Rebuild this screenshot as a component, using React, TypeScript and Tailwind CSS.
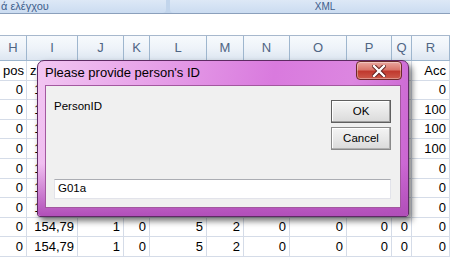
import type { ReactNode } from "react";

const cols = [
  { key: "H", w: 27 },
  { key: "I", w: 51 },
  { key: "J", w: 46 },
  { key: "K", w: 26 },
  { key: "L", w: 57 },
  { key: "M", w: 37 },
  { key: "N", w: 46 },
  { key: "O", w: 57 },
  { key: "P", w: 45 },
  { key: "Q", w: 20 },
  { key: "R", w: 38 },
];

const dataRow = (r: string) => ["0", "154,79", "1", "0", "5", "2", "0", "0", "0", "0", r];

// first row is text headers, the rest are numbers
const rows: string[][] = [
  ["pos", "z", "", "", "", "", "", "", "", "k", "Acc"],
  dataRow("0"),
  dataRow("100"),
  dataRow("100"),
  dataRow("100"),
  dataRow("0"),
  dataRow("0"),
  dataRow("0"),
  dataRow("0"),
  dataRow("0"),
];

function Cell({ w, children, left }: { w: number; children: ReactNode; left?: boolean }) {
  return (
    <div
      style={{ width: w }}
      className={`flex h-full shrink-0 items-center overflow-hidden whitespace-nowrap border-r border-[#d5dce8] px-[3px] ${
        left ? "justify-start" : "justify-end"
      }`}
    >
      {children}
    </div>
  );
}

function Button({ children, primary }: { children: ReactNode; primary?: boolean }) {
  return (
    <div
      className={`flex h-[23px] w-[60px] items-center justify-center border bg-[linear-gradient(180deg,#f4f4f4_0%,#e8e8e8_50%,#dadada_100%)] ${
        primary
          ? "border-[#5f5f5f] shadow-[inset_-1px_-1px_0_#a0a0a0,inset_1px_1px_0_#ffffff]"
          : "border-[#8a8a8a] shadow-[inset_-1px_-1px_0_#b0b0b0,inset_1px_1px_0_#ffffff]"
      }`}
    >
      {children}
    </div>
  );
}

function Dialog() {
  return (
    <div className="absolute left-[37px] top-[60px] flex h-[157px] w-[372px] flex-col rounded-t-[7px] rounded-b-[3px] border border-[#5e2a63] bg-[linear-gradient(100deg,#f2c6f2_0%,#e6a0e8_30%,#d97ade_60%,#dc86e0_80%,#c862d0_100%)] shadow-[3px_4px_6px_rgba(0,0,0,0.55)]">
      {/* title bar */}
      <div className="flex h-[24px] shrink-0 items-start justify-between pl-[7px] pr-[6px]">
        <span className="pt-[4px] text-[13px] leading-[16px] text-black">Please provide person's ID</span>
        <div className="flex h-[19px] w-[46px] items-center justify-center rounded-[4px] border border-[#6b2a2a] bg-[linear-gradient(180deg,#eaa79f_0%,#d9766b_45%,#c0392e_55%,#cd5a4b_100%)] shadow-[inset_0_0_0_1px_rgba(255,255,255,0.35)]">
          <svg width="14" height="12" viewBox="0 0 14 12">
            <path d="M2 1 L12 11 M12 1 L2 11" stroke="#5a1a1a" strokeWidth="4.2" strokeLinecap="square" />
            <path d="M2 1 L12 11 M12 1 L2 11" stroke="#ffffff" strokeWidth="2.4" strokeLinecap="square" />
          </svg>
        </div>
      </div>

      {/* frame body with client area */}
      <div className="flex flex-1 flex-col rounded-b-[3px] bg-[linear-gradient(180deg,rgba(190,80,198,0)_0%,rgba(190,80,198,0)_60%,#b14fb9_100%)] px-[7px] pb-[8px]">
        <div className="flex flex-1 flex-col border border-[#a3589f] bg-[#f0f0f0] pb-[8px] pl-[8px] pr-[9px] pt-[12px] text-[11.5px] text-black">
          <div className="flex items-start justify-between">
            <span className="leading-[16px]">PersonID</span>
            <div className="mt-[2px] flex flex-col gap-[4px]">
              <Button primary>OK</Button>
              <Button>Cancel</Button>
            </div>
          </div>
          <div className="mt-auto flex h-[20px] items-center border border-[#e2e3ea] border-t-[#abadb3] bg-white pl-[3px]">
            G01a
          </div>
        </div>
      </div>
    </div>
  );
}

export default function App() {
  return (
    <div className="relative h-[262px] w-[450px] overflow-hidden bg-white [font-family:'Liberation_Sans',Arial,sans-serif]">
      {/* ribbon group labels */}
      <div className="flex h-[14px] gap-[4px] border-b border-[#8ba0bc] bg-[#c2d5ec]">
        <div className="flex w-[166px] items-center rounded-br-[4px] bg-[linear-gradient(180deg,#dde8f6,#cbdcf1)] pl-[1px] text-[11px] leading-none text-[#3e5e8c]">
          ά ελέγχου
        </div>
        <div className="flex flex-1 items-center justify-center rounded-bl-[4px] bg-[linear-gradient(180deg,#dde8f6,#cbdcf1)] pl-[30px] text-[10px] leading-none text-[#3e5e8c]">
          XML
        </div>
      </div>

      {/* blank strip above the sheet */}
      <div className="h-[22px] border-b border-[#a7b8cd] bg-white" />

      {/* column headers */}
      <div className="flex h-[25px] border-b border-[#9eb6ce] bg-[linear-gradient(180deg,#f7fafd_0%,#eef3f9_50%,#dde6f1_100%)] text-[13px] text-[#4f6584]">
        {cols.map((c) => (
          <div
            key={c.key}
            style={{ width: c.w }}
            className="flex h-full shrink-0 items-center justify-center border-r border-[#9eb6ce]"
          >
            {c.key}
          </div>
        ))}
      </div>

      {/* sheet rows */}
      <div className="text-[13px] text-black">
        {rows.map((r, i) => (
          <div key={i} className="flex h-[19.6px] border-b border-[#d5dce8]">
            {cols.map((c, j) => (
              <Cell key={c.key} w={c.w} left={i === 0 && j < 2}>
                {r[j]}
              </Cell>
            ))}
          </div>
        ))}
      </div>

      <Dialog />
    </div>
  );
}
